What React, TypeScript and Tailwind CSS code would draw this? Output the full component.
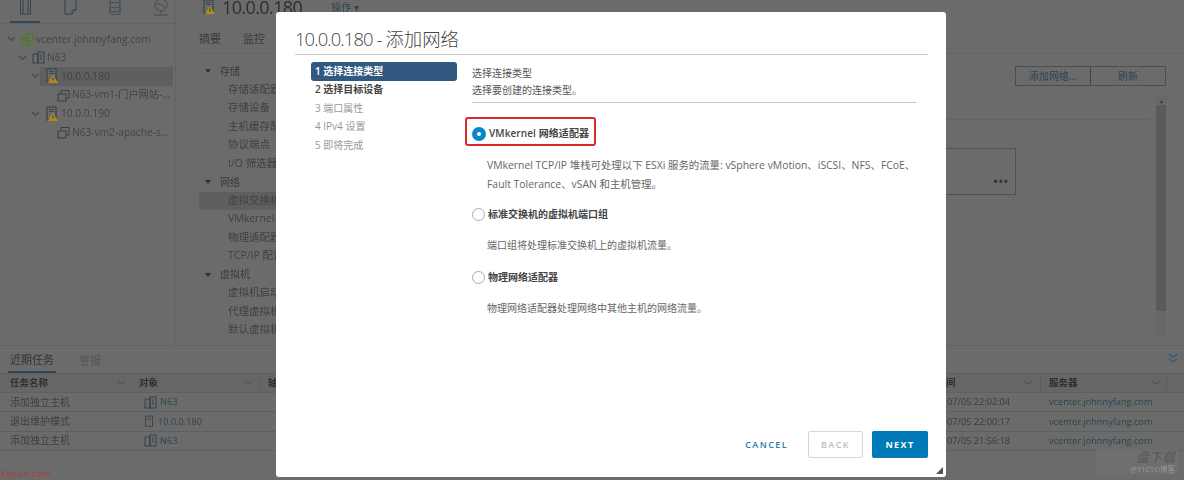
import React from "react";

const font = { fontFamily: '"Open Sans","Noto Sans CJK SC",sans-serif' };

const Caret = ({ className = "" }: { className?: string }) => (
  <svg width="9" height="6" viewBox="0 0 9 6" className={className} fill="none" stroke="currentColor" strokeWidth="1.2">
    <path d="M1 1l3.5 3.5L8 1" />
  </svg>
);

const HostIcon = ({ warn = true, size = 14 }: { warn?: boolean; size?: number }) => (
  <svg width={size} height={size + 2} viewBox="0 0 14 16" className="shrink-0" fill="none">
    <rect x="2" y="1" width="9" height="13" fill="#6b6b6b" stroke="#2f3d47" strokeWidth="1" />
    <path d="M4 3.5h5M4 5.5h5" stroke="#2f3d47" strokeWidth="0.8" />
    {warn && <path d="M8 7l5 8H3z" fill="#b38a1c" />}
    {warn && <path d="M8 9.5v3" stroke="#333" strokeWidth="1" />}
  </svg>
);

const ClusterIcon = () => (
  <svg width="13" height="13" viewBox="0 0 13 13" fill="none" stroke="#2f3d47" strokeWidth="0.9" className="shrink-0">
    <rect x="1" y="3" width="5" height="9" />
    <rect x="6" y="1" width="6" height="11" />
    <path d="M8 4h2M8 6h2M8 8h2" />
  </svg>
);

const VmIcon = () => (
  <svg width="13" height="13" viewBox="0 0 13 13" fill="none" stroke="#2f3d47" strokeWidth="0.9" className="shrink-0">
    <rect x="1" y="5" width="8" height="7" />
    <path d="M4 5V1.5h8V9H9" />
  </svg>
);

const TreeRow = ({ indent, chevron, icon, label, selected }: { indent: string; chevron?: boolean; icon: React.ReactNode; label: string; selected?: boolean }) => (
  <div className={`flex h-[18.6px] items-center text-[10.2px] text-[#444] ${indent}`}>
    {chevron && <Caret className="mr-[5px] text-[#3f4a52]" />}
    <div className={`flex h-full min-w-0 flex-1 items-center gap-[2px] ${selected ? "-ml-[5px] mr-[2px] bg-[#5e5f60] pl-[5px]" : ""}`}>
      {icon}
      <span className="whitespace-nowrap">{label}</span>
    </div>
  </div>
);

const MenuHead = ({ label }: { label: string }) => (
  <div className="flex h-[18.5px] items-center pl-[6px] text-[10px] text-[#3a3a3a]">
    <span className="mr-[9px] h-0 w-0 border-x-[3px] border-t-[4px] border-x-transparent border-t-[#2f2f2f]" />
    {label}
  </div>
);

const MenuItem = ({ label, active }: { label: string; active?: boolean }) => (
  <div className={`flex h-[18.5px] items-center whitespace-nowrap pl-[29px] text-[10.5px] text-[#404040] ${active ? "bg-[#5f5f5f]" : ""}`}>{label}</div>
);

const Radio = ({ checked }: { checked?: boolean }) =>
  checked ? (
    <span className="flex h-[14px] w-[14px] shrink-0 items-center justify-center rounded-full bg-[#0a87c9]">
      <span className="h-[4px] w-[4px] rounded-full bg-white" />
    </span>
  ) : (
    <span className="h-[13px] w-[13px] shrink-0 rounded-full border border-[#a9a9a9] bg-white" />
  );

const TaskRow = ({ name, icon, obj, time }: { name: string; icon: React.ReactNode; obj: string; time: string }) => (
  <div className="flex h-[19.3px] items-center border-b border-[#5f5f5f] text-[9.2px]">
    <span className="w-[137px] pl-[10px] text-[10px] text-[#404040]">{name}</span>
    <span className="flex w-[809px] items-center gap-[3px] pl-[7px] text-[#2f4350]">{icon}{obj}</span>
    <span className="w-[103px] pl-[1px] text-[#3a3a3a]">{time}</span>
    <span className="text-[#2f4350]">vcenter.johnnyfang.com</span>
  </div>
);

export default function App() {
  return (
    <div className="relative h-[480px] w-[1184px] overflow-hidden bg-[#6b6b6b]" style={font}>
      <div className="relative flex h-full flex-col blur-[0.4px]">
        <div className="flex h-[346px] border-b border-[#626262]">
          {/* sidebar */}
          <aside className="w-[176px] shrink-0 border-r border-[#646464]">
            <div className="flex h-[24px] items-start border-b border-[#626262] pl-[10px]">
              <div className="flex h-[23px] w-[30px] justify-center border-b-2 border-[#2c4a5e]">
                <svg width="15" height="15" viewBox="0 0 15 15" fill="none" stroke="#34424c"><rect x="2.5" y="-3" width="10" height="17" /><path d="M5 0v13M10 0v13" /></svg>
              </div>
              <svg width="15" height="15" viewBox="0 0 15 15" fill="none" stroke="#34424c" className="ml-[23px]"><path d="M2 -2h11v12l-4 4H2z" /><path d="M13 10H9v4" /></svg>
              <svg width="14" height="15" viewBox="0 0 14 15" fill="none" stroke="#3d4b55" className="ml-[30px]"><ellipse cx="7" cy="1" rx="5" ry="2" /><path d="M2 1v12c0 2.5 10 2.5 10 0V1M2 6c0 2.5 10 2.5 10 0M2 10c0 2.5 10 2.5 10 0" /></svg>
              <svg width="16" height="17" viewBox="0 0 16 17" fill="none" stroke="#3d4b55" className="ml-[31px]"><circle cx="8" cy="5" r="6" /><path d="M4 3l5 2 3 3M8 11v3M1 15h14" /></svg>
            </div>
            <div className="pt-[6px]">
              <TreeRow indent="pl-[7px]" chevron icon={
                <svg width="13" height="13" viewBox="0 0 13 13" fill="none" stroke="#4d7a2a" strokeWidth="1.4" className="shrink-0"><rect x="1" y="5" width="7" height="7" /><rect x="5" y="1" width="7" height="7" /></svg>
              } label="vcenter.johnnyfang.com" />
              <TreeRow indent="pl-[18px]" chevron icon={<ClusterIcon />} label="N63" />
              <TreeRow indent="pl-[31px]" chevron selected icon={<HostIcon />} label="10.0.0.180" />
              <TreeRow indent="pl-[57px]" icon={<VmIcon />} label="N63-vm1-门户网站-..." />
              <TreeRow indent="pl-[31px]" chevron icon={<HostIcon />} label="10.0.0.190" />
              <TreeRow indent="pl-[57px]" icon={<VmIcon />} label="N63-vm2-apache-s..." />
            </div>
          </aside>

          {/* main */}
          <main className="flex min-w-0 flex-1 flex-col">
            <div className="flex h-[17px] items-start pl-[26px]">
              <div className="-mt-[1px]"><HostIcon size={14} /></div>
              <span className="-mt-[4px] ml-[6px] text-[18px] leading-[22px] tracking-[-0.6px] text-[#2e2e2e]">10.0.0.180</span>
              <span className="ml-[29px] text-[10px] leading-[14px] text-[#2f4350]">操作 ▾</span>
            </div>
            <div className="ml-[23px] flex h-[37px] items-end gap-[22px] border-b border-[#636363] pb-[6px] text-[11px] text-[#3a3a3a]">
              <span>摘要</span>
              <span>监控</span>
            </div>
            <div className="flex min-h-0 flex-1">
              <nav className="ml-[23px] w-[100px] shrink-0 pt-[8px]">
                <MenuHead label="存储" />
                <MenuItem label="存储适配器" />
                <MenuItem label="存储设备" />
                <MenuItem label="主机缓存配置" />
                <MenuItem label="协议端点" />
                <MenuItem label="I/O 筛选器" />
                <MenuHead label="网络" />
                <MenuItem label="虚拟交换机" active />
                <MenuItem label="VMkernel" />
                <MenuItem label="物理适配器" />
                <MenuItem label="TCP/IP 配置" />
                <MenuHead label="虚拟机" />
                <MenuItem label="虚拟机启动" />
                <MenuItem label="代理虚拟机" />
                <MenuItem label="默认虚拟机" />
              </nav>
              <section className="flex min-w-0 flex-1 flex-col pl-[716px]">
                <div className="flex h-[32px] items-end">
                  <div className="flex h-[20px] w-[151px] shrink-0 border border-[#4b4f52] text-[10px] text-[#2f4350]">
                    <span className="flex w-[75px] items-center justify-center border-r border-[#3f4346]">添加网络...</span>
                    <span className="flex flex-1 items-center justify-center">刷新</span>
                  </div>
                </div>
                <div className="ml-[141px] mt-[11px] flex h-[241px] w-[10px] flex-col items-center bg-[#686868]">
                  <span className="h-[8px] text-[6px] leading-[8px] text-[#333]">▴</span>
                  <span className="mb-[27px] w-full flex-1 bg-[#5a5a5a]" />
                </div>
              </section>
            </div>
          </main>
        </div>

        {/* lines and box behind the modal */}
        <div className="absolute left-[900px] top-[119px] h-px w-[250px] bg-[#636363]" />
        <div className="absolute left-[900px] top-[148px] flex h-[47px] w-[116px] items-end justify-end border border-[#505050] pb-[8px] pr-[6px] text-[11px] font-bold leading-none tracking-[1px] text-[#333]">•••</div>

        {/* tasks */}
        <div className="flex-1">
          <div className="flex h-[28px] items-end justify-between border-b border-[#606060] pr-[5px]">
            <div className="flex h-full items-end text-[11px]">
              <span className="ml-[8px] flex h-[27px] w-[48px] items-center justify-center border-b-2 border-[#2c4a5e] pt-[3px] text-[#333]">近期任务</span>
              <span className="ml-[23px] flex h-[27px] items-center pt-[3px] text-[#555]">警报</span>
            </div>
            <svg width="12" height="12" viewBox="0 0 12 12" fill="none" stroke="#2c5a7d" strokeWidth="1.3" className="mb-[9px]"><path d="M2 2l4 3.5L10 2M2 6.5l4 3.5 4-3.5" /></svg>
          </div>
          <div className="flex h-[19px] items-center border-b border-[#606060] bg-[#666] text-[9.5px] font-semibold text-[#2e2e2e]">
            <span className="flex w-[132px] items-center justify-between pl-[10px] pr-[6px]">任务名称<Caret className="text-[#555]" /></span>
            <span className="flex w-[128px] items-center justify-between border-r border-[#5c5c5c] pl-[7px] pr-[6px]">对象<Caret className="text-[#555]" /></span>
            <span className="w-[686px] pl-[8px]">轴</span>
            <span className="flex w-[95px] items-center justify-between border-r border-[#5c5c5c] pr-[8px]">间<Caret className="text-[#555]" /></span>
            <span className="flex w-[126px] items-center justify-between border-r border-[#5c5c5c] pl-[8px] pr-[6px]">服务器<Caret className="text-[#555]" /></span>
          </div>
          <TaskRow name="添加独立主机" icon={<ClusterIcon />} obj="N63" time="07/05 22:02:04" />
          <TaskRow name="退出维护模式" icon={<HostIcon warn={false} size={11} />} obj="10.0.0.180" time="07/05 22:00:17" />
          <TaskRow name="添加独立主机" icon={<ClusterIcon />} obj="N63" time="07/05 21:56:18" />
          <div className="mt-[17px] pl-[1px] text-[9px] leading-[12px] tracking-[0.5px] text-[#b03a3a]">kkpan.com</div>
        </div>

        {/* watermark */}
        <div className="absolute left-[1096px] top-[450px] flex h-[25px] w-[82px] flex-col items-end bg-[#6f6f6f] pr-[3px]">
          <span className="text-[13px] font-bold italic leading-[15px] text-[#5f5f5f]">盘下载</span>
          <span className="text-[7.5px] leading-[9px] text-[#9a9a9a]">@51CTO博客</span>
        </div>
      </div>

      {/* modal */}
      <div className="absolute left-[276px] top-[12px] flex h-[465px] w-[670px] flex-col rounded-[3px] bg-white pl-[19px] pr-[18px]">
        <h1 className="flex h-[43px] items-end border-b border-[#c6c6c6] pb-[2px] text-[18.4px] font-light leading-[26px] text-[#444]">
          <span className="tracking-[-0.9px]">10.0.0.180 -&nbsp;</span>添加网络
        </h1>
        <div className="flex flex-1 pt-[7px]">
          <ol className="ml-[16px] w-[146px] shrink-0 text-[10px]">
            <li className="flex h-[18.5px] items-center rounded-[3px] bg-[#31587f] pl-[4px] font-semibold text-white">1 选择连接类型</li>
            <li className="flex h-[18.5px] items-center pl-[4px] font-semibold text-[#444]">2 选择目标设备</li>
            <li className="flex h-[18.5px] items-center pl-[4px] text-[#999]">3 端口属性</li>
            <li className="flex h-[18.5px] items-center pl-[4px] text-[#999]">4 IPv4 设置</li>
            <li className="flex h-[18.5px] items-center pl-[4px] text-[#999]">5 即将完成</li>
          </ol>
          <div className="ml-[15px] w-[444px]">
            <div className="border-b border-[#c6c6c6] pb-[3px] pt-[3px] text-[10px] leading-[17px] text-[#555]">
              <div>选择连接类型</div>
              <div>选择要创建的连接类型。</div>
            </div>
            <div className="-ml-[7px] mt-[14px] flex h-[29px] w-[131px] items-center rounded-[3px] border-2 border-[#d92b2b] pl-[5px] pt-[4px]">
              <Radio checked />
              <span className="ml-[3px] whitespace-nowrap text-[10px] font-semibold tracking-[0.1px] text-[#444]">VMkernel 网络适配器</span>
            </div>
            <p className="ml-[15px] mt-[10px] w-[440px] text-[10.4px] leading-[19px] text-[#666]">VMkernel TCP/IP 堆栈可处理以下 ESXi 服务的流量: vSphere vMotion、iSCSI、NFS、FCoE、Fault Tolerance、vSAN 和主机管理。</p>
            <div className="mt-[11px] flex h-[18px] items-center">
              <Radio />
              <span className="ml-[3px] text-[10px] font-semibold text-[#444]">标准交换机的虚拟机端口组</span>
            </div>
            <p className="ml-[15px] mt-[13px] text-[10px] leading-[19px] text-[#666]">端口组将处理标准交换机上的虚拟机流量。</p>
            <div className="mt-[13px] flex h-[18px] items-center">
              <Radio />
              <span className="ml-[3px] text-[10px] font-semibold text-[#444]">物理网络适配器</span>
            </div>
            <p className="ml-[15px] mt-[13px] text-[10px] leading-[19px] text-[#666]">物理网络适配器处理网络中其他主机的网络流量。</p>
          </div>
        </div>
        <div className="flex h-[46px] items-start justify-end">
          <button className="mr-[20px] flex h-[27px] items-center text-[9px] font-semibold tracking-[1.4px] text-[#2b7ea6]">CANCEL</button>
          <button className="mr-[9px] flex h-[27px] w-[55px] items-center justify-center rounded-[2px] border border-[#d8d8d8] text-[9px] font-semibold tracking-[1.4px] text-[#bdbdbd]">BACK</button>
          <button className="flex h-[27px] w-[56px] items-center justify-center rounded-[2px] bg-[#0079b8] text-[9px] font-bold tracking-[1.4px] text-white">NEXT</button>
        </div>
        <svg width="7" height="7" viewBox="0 0 7 7" className="absolute bottom-[3px] right-[3px]"><path d="M7 0v7H0z" fill="#555" /></svg>
      </div>
    </div>
  );
}
